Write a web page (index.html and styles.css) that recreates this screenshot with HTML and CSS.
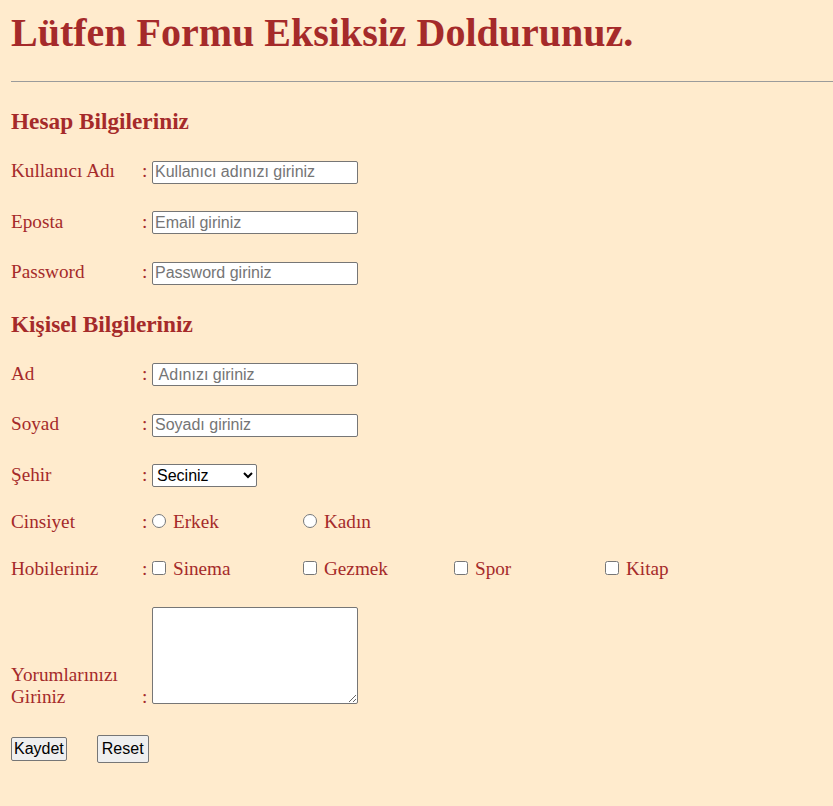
FILE: index.html
```html
<!DOCTYPE html>
<html lang="tr">
<head>
<meta charset="utf-8">
<title>Form</title>
<link rel="stylesheet" href="styles.css">
</head>
<body>
<h1 class="title">Lütfen Formu Eksiksiz Doldurunuz.</h1>
<hr class="rule">
<form class="form">
  <h3 class="section section-first">Hesap Bilgileriniz</h3>
  <div class="row">
    <span class="label">Kullanıcı Adı</span><span class="colon">:</span>
    <input class="field" type="text" placeholder="Kullanıcı adınızı giriniz">
  </div>
  <div class="row">
    <span class="label">Eposta</span><span class="colon">:</span>
    <input class="field" type="email" placeholder="Email giriniz">
  </div>
  <div class="row">
    <span class="label">Password</span><span class="colon">:</span>
    <input class="field" type="password" placeholder="Password giriniz">
  </div>

  <h3 class="section">Kişisel Bilgileriniz</h3>
  <div class="row row-first">
    <span class="label">Ad</span><span class="colon">:</span>
    <input class="field" type="text" placeholder=" Adınızı giriniz">
  </div>
  <div class="row">
    <span class="label">Soyad</span><span class="colon">:</span>
    <input class="field" type="text" placeholder="Soyadı giriniz">
  </div>
  <div class="row">
    <span class="label">Şehir</span><span class="colon">:</span>
    <select class="select">
      <option>Seciniz</option>
      <option>İstanbul</option>
      <option>Ankara</option>
      <option>İzmir</option>
    </select>
  </div>
  <div class="row row-radio">
    <span class="label">Cinsiyet</span><span class="colon">:</span>
    <label class="option"><input class="radio" type="radio" name="cinsiyet">Erkek</label>
    <label class="option"><input class="radio" type="radio" name="cinsiyet">Kadın</label>
  </div>
  <div class="row row-check">
    <span class="label">Hobileriniz</span><span class="colon">:</span>
    <label class="option"><input class="check" type="checkbox">Sinema</label>
    <label class="option"><input class="check" type="checkbox">Gezmek</label>
    <label class="option"><input class="check" type="checkbox">Spor</label>
    <label class="option"><input class="check" type="checkbox">Kitap</label>
  </div>
  <div class="row row-text">
    <span class="label">Yorumlarınızı Giriniz</span><span class="colon">:</span>
    <textarea class="area"></textarea>
  </div>
  <div class="buttons">
    <button class="btn btn-save" type="submit">Kaydet</button>
    <button class="btn btn-reset" type="reset">Reset</button>
  </div>
</form>
</body>
</html>
```
FILE: styles.css
```css
html, body {
  background: #ffebcd;
}
body {
  margin: 0;
  padding: 11px 0 40px 11px;
  font-family: "Liberation Serif", "Times New Roman", serif;
  color: #a52a2a;
  font-size: 19.2px;
  line-height: 22px;
}
.title {
  margin: 0;
  font-size: 40px;
  line-height: 44px;
  font-weight: bold;
}
.rule {
  margin: 26px 0 0 0;
  border: none;
  border-top: 1px solid #9b9b9b;
  height: 0;
}
.form {
  margin: 0;
}
.section {
  margin: 0;
  font-size: 23.3px;
  line-height: 26px;
  font-weight: bold;
}
.section-first {
  margin-top: 26px;
}
.row {
  display: grid;
  grid-template-columns: 130px 11px 151px 151px 151px 151px;
  align-items: baseline;
  margin-top: 27px;
}
.section + .row {
  margin-top: 26px;
}
.row + .section {
  margin-top: 26px;
}
.row-radio {
  margin-top: 24px;
}
.row-check {
  margin-top: 25px;
}
.row-text {
  align-items: end;
  margin-top: 27px;
}
.colon {
  padding-left: 1px;
}
.field {
  box-sizing: border-box;
  width: 206px;
  height: 23px;
  margin: 0;
  padding: 1px 2px;
  border: 1px solid #767676;
  border-radius: 2px;
  background: #fff;
  font-family: "Liberation Sans", Arial, sans-serif;
  font-size: 16px;
  color: #000;
  grid-column: 3 / span 2;
  justify-self: start;
}
.field::placeholder {
  color: #757575;
}
.select {
  box-sizing: border-box;
  width: 105px;
  height: 23px;
  margin: 0;
  border: 1px solid #767676;
  border-radius: 2px;
  background: #fff;
  font-family: "Liberation Sans", Arial, sans-serif;
  font-size: 16px;
  color: #000;
  justify-self: start;
}
.option {
  display: inline-block;
}
.radio,
.check {
  width: 14px;
  height: 14px;
  margin: 0 7px 1px 0;
  vertical-align: baseline;
}
.area {
  box-sizing: border-box;
  width: 206px;
  height: 97px;
  margin: 0 0 4px 0;
  border: 1px solid #767676;
  border-radius: 2px;
  background: #fff;
  grid-column: 3 / span 2;
  justify-self: start;
}
.buttons {
  display: flex;
  align-items: baseline;
  gap: 30px;
  margin-top: 27px;
}
.btn {
  margin: 0;
  border: 1px solid #767676;
  border-radius: 2px;
  background: #efefef;
  font-family: "Liberation Sans", Arial, sans-serif;
  font-size: 16px;
  line-height: 18px;
  color: #000;
}
.btn-save {
  padding: 2px 2px;
}
.btn-reset {
  padding: 4px 4px;
}
```
